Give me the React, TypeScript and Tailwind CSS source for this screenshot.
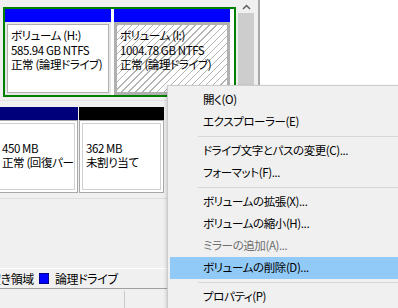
import * as React from "react";

type MenuEntry = { label: string; disabled?: boolean; active?: boolean } | "sep";

const menu: MenuEntry[] = [
  { label: "開く(O)" },
  { label: "エクスプローラー(E)" },
  "sep",
  { label: "ドライブ文字とパスの変更(C)..." },
  { label: "フォーマット(F)..." },
  "sep",
  { label: "ボリュームの拡張(X)..." },
  { label: "ボリュームの縮小(H)..." },
  { label: "ミラーの追加(A)...", disabled: true },
  { label: "ボリュームの削除(D)...", active: true },
  "sep",
  { label: "プロパティ(P)" },
];

function Lines({ lines }: { lines: string[] }) {
  return (
    <div className="whitespace-nowrap leading-[14.5px]">
      {lines.map((l, i) => (
        <div key={i} className="h-[14.5px]">
          {l}
        </div>
      ))}
    </div>
  );
}

function Partition({
  bar,
  width,
  lines,
  hatch,
  outlined,
}: {
  bar: string;
  width: string;
  lines: string[];
  hatch?: boolean;
  outlined?: boolean;
}) {
  return (
    <div className={`flex flex-col ${width}`}>
      <div className={`h-[13px] shrink-0 ${bar}`} />
      {hatch ? (
        <div className="flex-1 overflow-hidden border-[3px] border-[#b0b0b0] bg-[repeating-linear-gradient(135deg,#b4b4b4_0px,#b4b4b4_1px,#ffffff_1px,#ffffff_5px)] pl-[3px] pt-[3px]">
          <Lines lines={lines} />
        </div>
      ) : outlined ? (
        <div className="flex-1 border border-[#a8a8a8] bg-white p-[2px]">
          <div className="h-full overflow-hidden border border-[#d0d0d0] bg-white pl-[3px] pt-[2px]">
            <Lines lines={lines} />
          </div>
        </div>
      ) : (
        <div className="flex-1 bg-[#e6e6e6] p-[2px]">
          <div className="h-full overflow-hidden border border-[#b0b0b0] bg-white pl-[3px] pt-[3px]">
            <Lines lines={lines} />
          </div>
        </div>
      )}
    </div>
  );
}

export default function App() {
  return (
    <div className="relative flex h-[308px] w-[398px] flex-col overflow-hidden bg-[#f0f0f0] font-['Noto_Sans_CJK_JP',sans-serif] text-[11.5px] tracking-[-0.4px] text-black [font-feature-settings:'palt']">
      {/* main area */}
      <div className="flex h-[268px] shrink-0">
        <div className="flex w-[238px] shrink-0 flex-col">
          {/* disk row 1 */}
          <div className="h-[100px] shrink-0 pl-[3px] pt-[7px]">
            <div className="flex h-[90px] w-[233px] gap-[3px] border-2 border-[#008000] bg-white pr-[4px]">
              <Partition
                bar="bg-[#0000ff]"
                width="w-[106px]"
                lines={["ボリューム (H:)", "585.94 GB NTFS", "正常 (論理ドライブ)"]}
              />
              <Partition
                bar="bg-[#0000ff]"
                width="w-[116px]"
                hatch
                lines={["ボリューム (I:)", "1004.78 GB NTFS", "正常 (論理ドライブ)"]}
              />
            </div>
          </div>
          {/* disk row 2 */}
          <div className="w-[260px] shrink-0 border-t border-[#e3e3e3] pt-[6px]">
            <div className="ml-[-5px] flex h-[86px] gap-[1px]">
              <Partition
                bar="bg-[#00007b]"
                width="w-[83px]"
                outlined
                lines={["", "450 MB", "正常 (回復パーティション)"]}
              />
              <Partition
                bar="bg-black"
                width="w-[85px]"
                outlined
                lines={["", "362 MB", "未割り当て"]}
              />
            </div>
            <div className="mt-[5px] border-b border-[#dcdcdc]" />
          </div>
        </div>

        {/* scrollbar */}
        <div className="flex w-[16px] shrink-0 flex-col">
          <div className="flex h-[13px] items-center justify-center bg-[#f0f0f0]">
            <svg width="9" height="6" viewBox="0 0 9 6">
              <polyline points="1,5 4.5,1.5 8,5" fill="none" stroke="#606060" strokeWidth="1.5" />
            </svg>
          </div>
          <div className="flex-1 bg-[#cdcdcd]" />
        </div>
        <div className="w-[4px] shrink-0" />
        <div className="w-[2px] shrink-0 bg-[#a9a9a9]" />
        <div className="flex-1 bg-white" />
      </div>

      {/* legend */}
      <div className="flex h-[21px] shrink-0 items-center border-t border-b border-t-white border-b-[#a0a0a0] text-[12px]">
        <span className="ml-[-11px] whitespace-nowrap">空き領域</span>
        <span className="ml-[5px] h-[11px] w-[10px] shrink-0 border border-[#00008b] bg-[#0000ff]" />
        <span className="ml-[6px] whitespace-nowrap">論理ドライブ</span>
      </div>

      {/* status bar */}
      <div className="flex flex-1">
        <div className="mt-[2px] w-[125px] border-r border-[#c8c8c8]" />
      </div>

      {/* context menu */}
      <div className="absolute left-[167px] top-[85px] h-[240px] w-[240px] border border-[#cccccc] bg-[#f0f0f0] px-[2px] pt-[3px] shadow-[-1px_1px_3px_rgba(0,0,0,0.15)]">
        {menu.map((m, i) =>
          m === "sep" ? (
            <div key={i} className="flex h-[7px] items-center">
              <div className="ml-[28px] h-px flex-1 bg-[#d7d7d7]" />
            </div>
          ) : (
            <div
              key={i}
              className={`flex h-[22px] items-center whitespace-nowrap pl-[33px] ${
                m.active ? "bg-[#91c9f7]" : ""
              } ${m.disabled ? "text-[#6d6d6d]" : "text-black"}`}
            >
              {m.label}
            </div>
          )
        )}
      </div>
    </div>
  );
}
